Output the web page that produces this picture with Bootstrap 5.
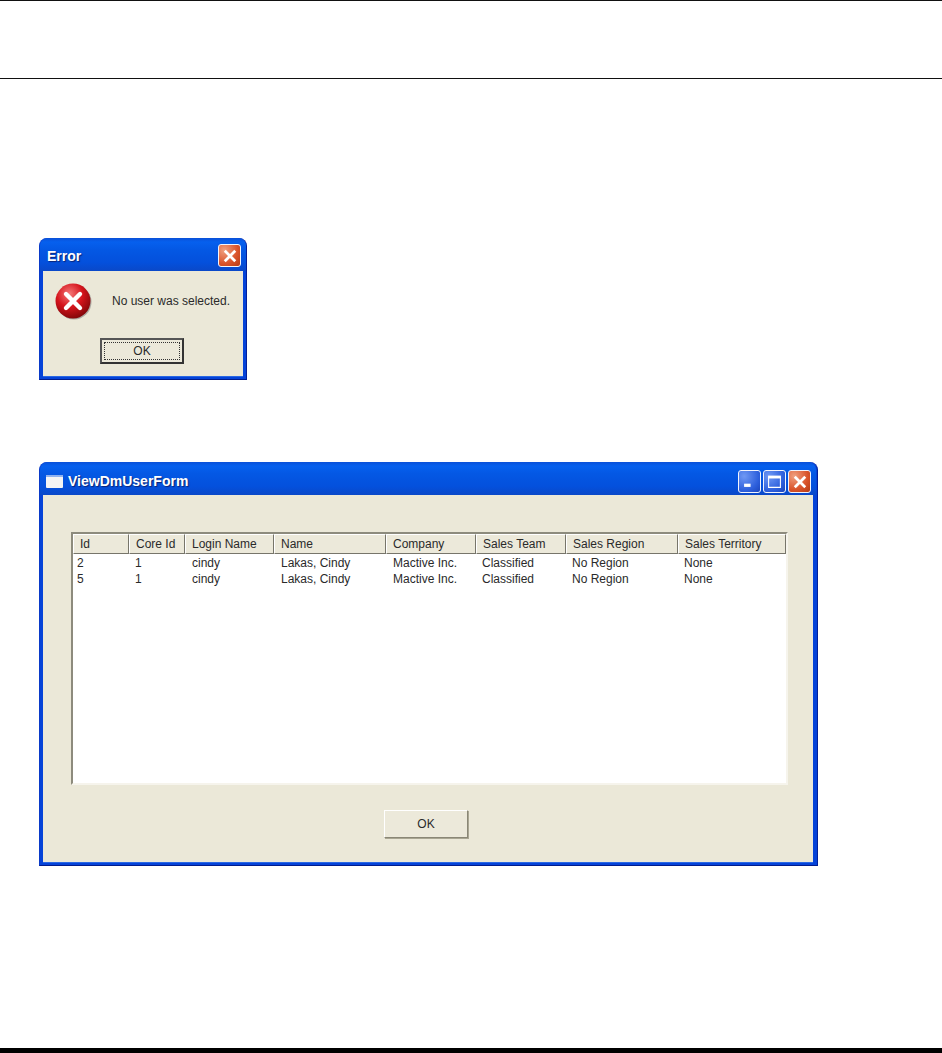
<!DOCTYPE html>
<html>

<head>
    <title>ViewDmUserForm</title>
    <link href="https://cdn.jsdelivr.net/npm/bootstrap@5.3.0/dist/css/bootstrap.min.css" rel="stylesheet">
    <style>
        html, body { height: 1053px; overflow: hidden; }
        body { background: #fff; color: #2a2a2a; font-family: "Liberation Sans", Arial, sans-serif; font-size: 12px; line-height: 16px; }
        .page-frame { height: 1053px; }
        .head-band { height: 79px; border-top: 1px solid #111; border-bottom: 1px solid #111; }
        .page-body { padding: 159px 0 0 39px; }
        .foot-band { height: 5px; background: #000; }

        /* xp window */
        .xp-win { background: #0543d8; border-radius: 8px 8px 0 0; padding: 0 3px 3px; border-left: 1px solid #0a3ac8; border-right: 1px solid #02209a; border-bottom: 1px solid #021c8c; }
        .xp-error { width: 208px; height: 142px; }
        .xp-form { width: 779px; height: 404px; margin-top: 82px; padding-right: 4px; }
        .xp-title { height: 33px; padding: 6px 5px 0 7px; color: #fff; font-weight: 700; font-size: 14px; text-shadow: 1px 1px 1px #0a2478; background: linear-gradient(#0a50d8, #0660ee 12%, #0458e4 35%, #0450dc 75%, #0a48c8); margin: 0 -3px; border-radius: 8px 8px 0 0; }
        .xp-client { background: #ebe8d8; box-shadow: 0 1px 0 #2a68e4; }
        .xp-cap-btn { width: 23px; height: 23px; border: 1px solid #f2f4fc; border-radius: 3px; display: flex; align-items: center; justify-content: center; }
        .xp-cap-blue { background: radial-gradient(circle at 25% 25%, #6f98f4, #2d5fdc 65%, #1c45bb); }
        .xp-cap-red { background: radial-gradient(circle at 25% 25%, #f0a080, #d9532a 60%, #b53a14); }
        .cap-row { gap: 2px; margin-top: 2px; }
        .title-text { padding-top: 4px; }
        .title-text-icon { padding-top: 5px; gap: 5px; margin-left: -1px; }

        /* buttons */
        .xp-btn { background: #ece9da; color: #2a2a2a; font-family: "Liberation Sans", Arial, sans-serif; font-size: 12px; line-height: 16px; border-radius: 0; padding: 0; width: 84px; height: 28px; border: 1px solid; border-color: #fff #8a8776 #8a8776 #fff; box-shadow: 1px 1px 0 #a9a692; }
        .xp-btn-def { border: 2px solid; border-color: #555 #333 #333 #555; box-shadow: none; height: 26px; position: relative; }
        .xp-btn-def::after { content: ""; position: absolute; inset: 2px; border: 1px dotted #333; }
        .error-msg { padding: 11px 0 0 11px; }
        .error-act { padding: 18px 0 0 57px; }
        .form-act { padding: 25px 0 0 341px; }

        /* list view */
        .lv-box { width: 717px; height: 253px; margin: 37px 0 0 28px; border: 2px solid; border-color: #8d8b7d #f6f4ec #f6f4ec #8d8b7d; background: #fff; }
        .lv-row { display: grid; grid-template-columns: 56px 56px 89px 112px 90px 90px 112px 108px; }
        .lv-headrow { height: 20px; background: #ece9da; }
        .lv-headrow > div { padding: 1px 0 0 6px; border: 1px solid; border-color: #fff #77756a #77756a #fff; white-space: nowrap; }
        .lv-rows { padding-top: 1px; }
        .lv-rows .lv-row > div { padding-left: 6px; height: 16px; white-space: nowrap; }
        .lv-rows .lv-row > div:first-child { padding-left: 4px; }
        .lv-rows .lv-row > div:nth-child(3), .lv-rows .lv-row > div:nth-child(4), .lv-rows .lv-row > div:nth-child(5) { padding-left: 7px; }
    </style>
</head>

<body>
    <div class="page-frame d-flex flex-column">
        <div class="head-band"></div>
        <div class="page-body flex-grow-1">

            <!-- error dialog -->
            <div class="xp-win xp-error d-flex flex-column">
                <div class="xp-title d-flex justify-content-between align-items-start">
                    <span class="title-text">Error</span>
                    <span class="xp-cap-btn xp-cap-red">
                        <svg width="14" height="14" viewBox="0 0 12 12"><path d="M1.5 1.5 10.5 10.5M10.5 1.5 1.5 10.5" stroke="#fff" stroke-width="2.4" /></svg>
                    </span>
                </div>
                <div class="xp-client flex-grow-1 d-flex flex-column">
                    <div class="error-msg d-flex align-items-center">
                        <svg width="38" height="38" viewBox="0 0 38 38">
                            <defs>
                                <radialGradient id="redBall" cx="40%" cy="30%" r="75%">
                                    <stop offset="0" stop-color="#f57a7a" />
                                    <stop offset=".5" stop-color="#d5141c" />
                                    <stop offset="1" stop-color="#7a0508" />
                                </radialGradient>
                            </defs>
                            <circle cx="20" cy="20" r="17.5" fill="#777" opacity=".55" />
                            <circle cx="19" cy="19" r="17.5" fill="url(#redBall)" />
                            <path d="M12 12 26 26M26 12 12 26" stroke="#fff" stroke-width="4.4" stroke-linecap="round" />
                        </svg>
                        <span class="ms-3 ps-1">No user was selected.</span>
                    </div>
                    <div class="error-act d-flex">
                        <button class="btn xp-btn xp-btn-def" type="button">OK</button>
                    </div>
                </div>
            </div>

            <!-- user form -->
            <div class="xp-win xp-form d-flex flex-column">
                <div class="xp-title d-flex justify-content-between align-items-start">
                    <span class="title-text-icon d-flex align-items-center">
                        <svg width="17" height="13" viewBox="0 0 17 13"><rect width="17" height="13" rx="1" fill="#f4f4f4" /><rect width="17" height="2" fill="#8fb2ef" /></svg>
                        ViewDmUserForm
                    </span>
                    <span class="cap-row d-flex">
                        <span class="xp-cap-btn xp-cap-blue">
                            <svg width="13" height="13" viewBox="0 0 12 12"><rect x="1" y="8" width="6" height="3" fill="#fff" /></svg>
                        </span>
                        <span class="xp-cap-btn xp-cap-blue">
                            <svg width="15" height="15" viewBox="0 0 14 14"><path d="M1.5 3.5h11v9h-11z" fill="none" stroke="#fff" /><rect x="1" y="1.5" width="12" height="2.5" fill="#fff" /></svg>
                        </span>
                        <span class="xp-cap-btn xp-cap-red">
                            <svg width="14" height="14" viewBox="0 0 12 12"><path d="M1.5 1.5 10.5 10.5M10.5 1.5 1.5 10.5" stroke="#fff" stroke-width="2.4" /></svg>
                        </span>
                    </span>
                </div>
                <div class="xp-client flex-grow-1 d-flex flex-column">
                    <div class="lv-box">
                        <div class="lv-row lv-headrow">
                            <div>Id</div>
                            <div>Core Id</div>
                            <div>Login Name</div>
                            <div>Name</div>
                            <div>Company</div>
                            <div>Sales Team</div>
                            <div>Sales Region</div>
                            <div>Sales Territory</div>
                        </div>
                        <div class="lv-rows">
                            <div class="lv-row">
                                <div>2</div><div>1</div><div>cindy</div><div>Lakas, Cindy</div><div>Mactive Inc.</div><div>Classified</div><div>No Region</div><div>None</div>
                            </div>
                            <div class="lv-row">
                                <div>5</div><div>1</div><div>cindy</div><div>Lakas, Cindy</div><div>Mactive Inc.</div><div>Classified</div><div>No Region</div><div>None</div>
                            </div>
                        </div>
                    </div>
                    <div class="form-act d-flex">
                        <button class="btn xp-btn" type="button">OK</button>
                    </div>
                </div>
            </div>

        </div>
        <div class="foot-band"></div>
    </div>
</body>

</html>
